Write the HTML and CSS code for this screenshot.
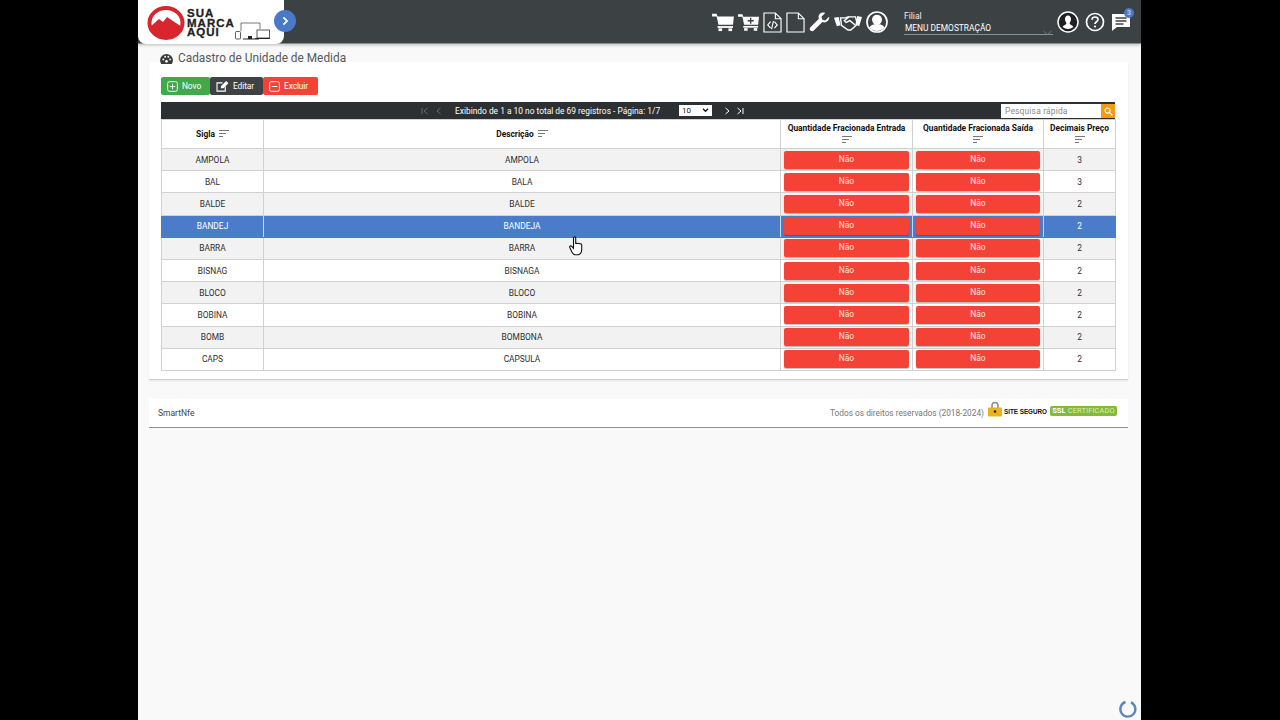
FILE: index.html
```html
<!DOCTYPE html>
<html lang="pt-BR">
<head>
<meta charset="utf-8">
<title>Cadastro de Unidade de Medida</title>
<link rel="stylesheet" href="styles.css">
</head>
<body>
<svg class="defs" width="0" height="0" aria-hidden="true">
  <symbol id="sort" viewBox="0 0 10 7"><path d="M0 .5h10M0 3.5h7M0 6.5h4" fill="none" stroke="currentColor" stroke-width="1"/></symbol>
</svg>
<div class="app">
  <header class="topbar">
    <div class="logo">
      <svg class="logo-mark" viewBox="0 0 38 34" width="38" height="34"><ellipse cx="19" cy="17" rx="16.500" ry="15" fill="#fff" stroke="#d9262e" stroke-width="4"/><path d="M3 21l9-8 4 3 4-5 15 10a16.500 15 0 0 1-32 0z" fill="#d9262e"/></svg>
      <div class="logo-text">SUA<br>MARCA<br>AQUI</div>
      <svg class="logo-dev" viewBox="0 0 36 18" width="36" height="18"><path d="M6 9V1h19v6" fill="none" stroke="#555" stroke-width=".8"/><rect x=".5" y="9.500" width="5" height="7.500" rx="1" fill="#fff" stroke="#333" stroke-width=".8"/><path d="M8 16.500h16v1H8z" fill="#222"/><path d="M13 14h4v3h-4z" fill="#222"/><rect x="22" y="8" width="12.500" height="8" fill="#fff" stroke="#333" stroke-width=".8"/><path d="M20 16.500h15" stroke="#222"/></svg>
      <span class="collapse"><svg viewBox="0 0 10 12" width="8" height="10"><path d="M3 1.500l4.500 4.500L3 10.500" fill="none" stroke="#fff" stroke-width="2.200"/></svg></span>
    </div>
    <div class="top-tools">
      <div class="tool-icons">
        <svg viewBox="0 0 24 22" width="22" height="20"><path d="M0 2h5l1 3h18l-1 9H7L5 5H0z" fill="#fff"/><path d="M6 15.500h17v2H6z" fill="#fff"/><rect x="7" y="18" width="4" height="3" fill="#fff"/><rect x="18" y="18" width="4" height="3" fill="#fff"/></svg>
        <svg viewBox="0 0 24 22" width="21" height="20"><path d="M0 2h5l1 3h18l-1 9H7L5 5H0z" fill="#fff"/><path d="M6 15.500h17v2H6z" fill="#fff"/><rect x="7" y="18" width="4" height="3" fill="#fff"/><rect x="18" y="18" width="4" height="3" fill="#fff"/><path d="M14.500 6v7M11 9.500h7" stroke="#3c4143" stroke-width="1.600"/></svg>
        <svg viewBox="0 0 20 22" width="19" height="21"><path d="M1 1h12l6 6v14H1zM13 1v6h6" fill="none" stroke="#fff" stroke-width="1.200"/><path d="M8 10l-3 3.500L8 17M12 10l3 3.500L12 17M11 9.500L9 18" fill="none" stroke="#fff" stroke-width="1.200"/></svg>
        <svg viewBox="0 0 20 22" width="19" height="21"><path d="M1 1h12l6 6v14H1zM13 1v6h6" fill="none" stroke="#fff" stroke-width="1.200"/></svg>
        <svg viewBox="0 0 22 22" width="21" height="21"><path d="M21 5l-4 4-3-1-1-3 4-4c-3-1.500-7 .5-7 4 0 1 .2 1.500.4 2L1.500 16c-1 1-1 2.500 0 3.500s2.500 1 3.500 0L14 10.600c4 1.400 8-2 7-5.600z" fill="#fff"/></svg>
        <svg viewBox="0 0 30 20" width="28" height="19"><path d="M0 5l5-1 2 9-4 1zM30 4l-5-1-2 9 4 2z" fill="#fff"/><path d="M7 5h5l3-1 8 0 2 8-7 6-3 0-7-5z" fill="none" stroke="#fff" stroke-width="1.500"/><path d="M16 4l-5 4 2 2 4-2 6 5" fill="none" stroke="#fff" stroke-width="1.500"/></svg>
        <svg viewBox="0 0 22 22" width="22" height="22"><circle cx="11" cy="11" r="10" fill="none" stroke="#fff" stroke-width="1.700"/><circle cx="11" cy="8.800" r="5" fill="#fff"/><path d="M3.500 16.500c1.500-3 5-3.500 7.500-3.500s6 .5 7.500 3.500a10 10 0 0 1-15 0z" fill="#fff"/></svg>
      </div>
      <div class="branch">
        <div class="branch-label">Filial</div>
        <div class="branch-value">MENU DEMOSTRAÇÃO<svg class="branch-caret" viewBox="0 0 10 6" width="9" height="6"><path d="M1 1l4 4 4-4" fill="none" stroke="#7d8386" stroke-width="1"/></svg></div>
      </div>
      <div class="user-icons">
        <svg viewBox="0 0 22 22" width="22" height="22"><circle cx="11" cy="11" r="10" fill="#1f2224" stroke="#fff" stroke-width="1.500"/><path d="M11 4.500c2 0 3.200 1.700 3 4-.2 1.700-1 2.700-1.500 3.700.2 1.500 2.800 1.800 4 3.800a9 9 0 0 1-11 0c1.200-2 3.800-2.300 4-3.800-.5-1-1.300-2-1.500-3.700-.2-2.300 1-4 3-4z" fill="#fff"/></svg>
        <svg viewBox="0 0 20 20" width="20" height="20"><circle cx="10" cy="10" r="8.500" fill="none" stroke="#fff" stroke-width="1.700"/><path d="M7 7.800C7 6 8.300 5 10 5s3 1 3 2.600c0 2.200-3 2.200-3 4.400" fill="none" stroke="#fff" stroke-width="1.700"/><circle cx="10" cy="14.500" r="1.100" fill="#fff"/></svg>
        <span class="chat">
          <svg viewBox="0 0 20 20" width="20" height="20"><path d="M1 2h18v13H6l-5 4z" fill="#fff"/><path d="M4.500 6h11M4.500 9h11M4.500 12h8" stroke="#3c4143" stroke-width="1.300"/></svg>
          <span class="badge">3</span>
        </span>
      </div>
    </div>
  </header>

  <main class="content">
    <h1 class="page-title">
      <svg viewBox="0 0 14 11" width="13" height="10"><path d="M7 0a7 7 0 0 0-7 7c0 1.500.5 3 1.200 4h11.600c.7-1 1.200-2.500 1.200-4a7 7 0 0 0-7-7z" fill="#3a3d3f"/><circle cx="3.500" cy="6" r="1" fill="#fff"/><circle cx="5.500" cy="3" r="1" fill="#fff"/><circle cx="9" cy="3" r="1" fill="#fff"/><circle cx="11" cy="6" r="1" fill="#fff"/><circle cx="7" cy="8" r="1.500" fill="#fff"/></svg>
      Cadastro de Unidade de Medida
    </h1>
    <section class="card">
      <div class="actions">
        <button class="btn btn-new"><svg viewBox="0 0 12 12" width="11" height="11"><rect x=".7" y=".7" width="10.600" height="10.600" rx="2" fill="none" stroke="#fff"/><path d="M6 3v6M3 6h6" stroke="#fff"/></svg>Novo</button>
        <button class="btn btn-edit"><svg viewBox="0 0 14 12" width="13" height="11"><path d="M10 6v5H1V2h6" fill="none" stroke="#fff" stroke-width="1.200"/><path d="M5 8l.5-2.500L11 0l2.500 2.500L8 8z" fill="#fff"/></svg>Editar</button>
        <button class="btn btn-del"><svg viewBox="0 0 12 12" width="11" height="11"><rect x=".7" y=".7" width="10.600" height="10.600" rx="2" fill="none" stroke="#fff"/><path d="M3 6h6" stroke="#fff"/></svg>Excluir</button>
      </div>
      <div class="paginator">
        <div class="pager">
          <svg class="pg dim" viewBox="0 0 8 8" width="8" height="8"><path d="M1 1v6M6.500 1L3 4l3.500 3" fill="none" stroke="currentColor"/></svg>
          <svg class="pg dim gap" viewBox="0 0 8 8" width="8" height="8"><path d="M5.500 1L2 4l3.500 3" fill="none" stroke="currentColor"/></svg>
          <span class="pager-text">Exibindo de 1 a 10 no total de 69 registros - Página: 1/7</span>
          <span class="page-size">10<svg viewBox="0 0 8 6" width="7" height="5"><path d="M1 1l3 3 3-3" fill="none" stroke="#111" stroke-width="1.600"/></svg></span>
          <svg class="pg" viewBox="0 0 8 8" width="8" height="8"><path d="M2.500 1L6 4 2.500 7" fill="none" stroke="currentColor"/></svg>
          <svg class="pg" viewBox="0 0 8 8" width="8" height="8"><path d="M1.500 1L5 4 1.500 7M7 1v6" fill="none" stroke="currentColor"/></svg>
        </div>
        <div class="search">
          <span class="search-input">Pesquisa rápida</span>
          <span class="search-btn"><svg viewBox="0 0 10 10" width="9" height="9"><circle cx="4" cy="4" r="2.800" fill="none" stroke="#fff" stroke-width="1.200"/><path d="M6 6l3.300 3.300" stroke="#fff" stroke-width="1.400"/></svg></span>
        </div>
      </div>
      <table class="grid">
        <colgroup><col class="c1"><col class="c2"><col class="c3"><col class="c4"><col class="c5"></colgroup>
        <thead>
          <tr>
            <th>Sigla <svg class="sort" width="10" height="7"><use href="#sort"/></svg></th>
            <th>Descrição <svg class="sort" width="10" height="7"><use href="#sort"/></svg></th>
            <th class="stack">Quantidade Fracionada Entrada<svg class="sort" width="10" height="7"><use href="#sort"/></svg></th>
            <th class="stack">Quantidade Fracionada Saída<svg class="sort" width="10" height="7"><use href="#sort"/></svg></th>
            <th class="stack">Decimais Preço<svg class="sort" width="10" height="7"><use href="#sort"/></svg></th>
          </tr>
        </thead>
        <tbody>
          <tr><td>AMPOLA</td><td>AMPOLA</td><td><span class="no">Não</span></td><td><span class="no">Não</span></td><td>3</td></tr>
          <tr><td>BAL</td><td>BALA</td><td><span class="no">Não</span></td><td><span class="no">Não</span></td><td>3</td></tr>
          <tr><td>BALDE</td><td>BALDE</td><td><span class="no">Não</span></td><td><span class="no">Não</span></td><td>2</td></tr>
          <tr class="selected"><td>BANDEJ</td><td>BANDEJA</td><td><span class="no">Não</span></td><td><span class="no">Não</span></td><td>2</td></tr>
          <tr><td>BARRA</td><td>BARRA</td><td><span class="no">Não</span></td><td><span class="no">Não</span></td><td>2</td></tr>
          <tr><td>BISNAG</td><td>BISNAGA</td><td><span class="no">Não</span></td><td><span class="no">Não</span></td><td>2</td></tr>
          <tr><td>BLOCO</td><td>BLOCO</td><td><span class="no">Não</span></td><td><span class="no">Não</span></td><td>2</td></tr>
          <tr><td>BOBINA</td><td>BOBINA</td><td><span class="no">Não</span></td><td><span class="no">Não</span></td><td>2</td></tr>
          <tr><td>BOMB</td><td>BOMBONA</td><td><span class="no">Não</span></td><td><span class="no">Não</span></td><td>2</td></tr>
          <tr><td>CAPS</td><td>CAPSULA</td><td><span class="no">Não</span></td><td><span class="no">Não</span></td><td>2</td></tr>
        </tbody>
      </table>
    </section>
    <footer class="footer">
      <span class="brand">SmartNfe</span>
      <div class="foot-right">
        <span class="rights">Todos os direitos reservados (2018-2024)</span>
        <svg class="lock" viewBox="0 0 14 16" width="14" height="16"><path d="M4 7V4.500a3 3 0 0 1 6 0V7" fill="none" stroke="#8b8d8f" stroke-width="1.600"/><rect x="0" y="6.500" width="14" height="9" rx="1" fill="#e9b31f"/><circle cx="7" cy="10.500" r="1.300" fill="#222"/></svg>
        <span class="seguro">SITE SEGURO</span>
        <span class="ssl"><b>SSL</b> CERTIFICADO</span>
      </div>
    </footer>
  </main>

  <svg class="cursor" viewBox="0 0 14 20" width="14" height="20"><path d="M4.500 2c0-1.500 2.200-1.500 2.200 0v6c0-1 2-1 2 0 0-1 2-1 2 .2 0-.8 2-.7 2 .5v5c0 2.500-1.500 5-3.500 5H6c-1.500 0-2-1-3-2.500L.8 11.500c-.7-1.200 1-2.300 2-1l1.700 1.800z" fill="#fff" stroke="#111" stroke-width="1.100"/></svg>
  <svg class="spinner" viewBox="0 0 20 20" width="20" height="20"><path d="M13 3.300A7.500 7.500 0 1 1 7.500 3" fill="none" stroke="#5d86bd" stroke-width="2.400"/></svg>
</div>
</body>
</html>
```
FILE: styles.css
```css
* { box-sizing: border-box; }
html, body { margin: 0; height: 100%; }
body {
  background: #000;
  font-family: Roboto, "Liberation Sans", sans-serif;
  overflow: hidden;
}
.defs { position: absolute; }
.app {
  position: relative;
  width: 1003px;
  height: 720px;
  margin-left: 138px;
  background: #f9f9f9;
}
.topbar {
  height: 44px;
  background: #3c4143;
  border-bottom: 1px solid #8c8f90;
  box-shadow: 0 1px 3px rgba(0,0,0,.25);
  display: flex;
  justify-content: space-between;
}
.logo {
  position: relative;
  width: 146px;
  height: 44px;
  background: #fff;
  border-radius: 0 0 8px 8px;
  display: flex;
  align-items: flex-start;
  padding: 6px 0 0 9px;
}
.logo-text {
  margin-left: 2px;
  margin-top: 3px;
  font: 900 11.500px/9.500px "Liberation Sans", sans-serif;
  letter-spacing: 1px;
  color: #222;
  -webkit-text-stroke: .3px #222;
}
.logo-dev { position: absolute; left: 97px; top: 22px; }
.collapse {
  position: absolute;
  left: 136px;
  top: 10px;
  width: 22px;
  height: 22px;
  border-radius: 50%;
  background: #4a7ac7;
  display: flex;
  align-items: center;
  justify-content: center;
}
.top-tools { display: flex; align-items: flex-start; }
.tool-icons {
  display: flex;
  align-items: center;
  gap: 4px;
  margin-top: 11px;
}
.branch { width: 149px; margin-left: 16px; margin-top: 11px; margin-right: 4px; color: #fff; }
.branch-label { font-size: 8.500px; line-height: 11px; color: #eee; }
.branch-value {
  position: relative;
  font-size: 8.400px;
  line-height: 13px;
  height: 13px;
  padding-left: 1px;
  border-bottom: 1px solid #8a8f91;
  white-space: nowrap;
}
.branch-caret { position: absolute; right: 1px; top: 8px; }
.user-icons {
  display: flex;
  align-items: center;
  gap: 6px;
  margin-top: 11px;
  margin-right: 10px;
}
.chat { position: relative; display: flex; }
.badge {
  position: absolute;
  right: -3px;
  top: -4px;
  width: 10px;
  height: 10px;
  border-radius: 50%;
  background: #4a7ac7;
  color: #dfe8f5;
  font-size: 7px;
  line-height: 10px;
  text-align: center;
}
.content { padding: 0 13px 0 11px; }
.page-title {
  margin: 0;
  height: 18px;
  padding: 7px 0 0 11px;
  font-size: 11.850px;
  font-weight: 400;
  line-height: 15px;
  color: #55595b;
  display: flex;
  align-items: flex-start;
  gap: 5px;
}
.page-title svg { margin-top: 3px; }
.card {
  background: #fff;
  height: 318px;
  padding: 15px 13px 0 12px;
  border-bottom: 1px solid #cfcfcf;
  box-shadow: 0 1px 2px rgba(0,0,0,.08);
}
.actions { display: flex; height: 18px; }
.btn {
  height: 18px;
  border: 0;
  border-radius: 2px;
  padding: 0 8px 0 6px;
  display: flex;
  align-items: center;
  gap: 4px;
  color: #fff;
  font: 400 8.400px Roboto, sans-serif;
  letter-spacing: -.1px;
}
.btn-new { width: 49px; background: #43a84a; }
.btn-edit { width: 53px; background: #3e4245; }
.btn-del { width: 55px; background: #f44336; }
.paginator {
  margin-top: 7px;
  height: 17px;
  background: #2c3032;
  display: flex;
  align-items: center;
  color: #fff;
  position: relative;
}
.pager { display: flex; align-items: center; margin-left: 260px; }
.pg { color: #fff; margin-right: 5px; }
.pg.dim { color: #666b6e; }
.pg.gap { margin-right: 0; margin-left: 1px; }
.pager-text {
  margin-left: 12px;
  width: 224px;
  font-size: 8.400px;
  white-space: nowrap;
}
.page-size {
  width: 33px;
  height: 11px;
  background: #fff;
  color: #222;
  margin-right: 11px;
  font-size: 8px;
  line-height: 11px;
  padding: 0 3px;
  display: flex;
  justify-content: space-between;
  align-items: center;
}
.search {
  position: absolute;
  right: 0;
  top: 2px;
  display: flex;
  height: 14px;
}
.search-input {
  width: 100px;
  background: #fff;
  color: #888;
  font-size: 8.400px;
  line-height: 14px;
  padding-left: 4px;
  letter-spacing: .2px;
}
.search-btn {
  width: 14px;
  background: #f39c12;
  display: flex;
  align-items: center;
  justify-content: center;
}
.grid {
  width: 954px;
  table-layout: fixed;
  border-collapse: collapse;
  font-size: 8.400px;
  color: #2e2e2e;
  background: #fff;
}
.c1 { width: 102px; }
.c2 { width: 517px; }
.c3 { width: 132px; }
.c4 { width: 131px; }
.c5 { width: 72px; }
.grid th, .grid td {
  border: 1px solid #cfd1d2;
  padding: 0 3px;
  text-align: center;
  vertical-align: middle;
}
.grid th {
  height: 29px;
  color: #111;
  font-size: 8.400px;
  font-weight: 700;
  white-space: nowrap;
}
.grid th.stack { vertical-align: top; padding-top: 3px; line-height: 11px; }
.stack .sort { display: block; margin: 2px auto 0; }
.sort { color: #777; vertical-align: 0; margin-left: 2px; }
.grid td { height: 22.200px; line-height: 12px; }
.grid tbody tr:nth-child(odd) td { background: #f2f2f2; }
.grid tbody tr.selected td {
  background: #4a7cc9;
  color: #fff;
  border-top-color: #4a7cc9;
  border-bottom-color: #4a7cc9;
  border-right-color: #c9d8ef;
  border-left-color: #c9d8ef;
}
.grid tbody tr.selected td:first-child { border-left-color: #4a7cc9; }
.grid tbody tr.selected td:last-child { border-right-color: #4a7cc9; }
.no {
  display: block;
  height: 18px;
  line-height: 16px;
  background: #f44336;
  color: #ffe6e3;
  border-radius: 2px;
  box-shadow: 0 1px 1px rgba(0,0,0,.25);
}
.footer {
  margin-top: 19px;
  height: 29px;
  background: #fff;
  border-bottom: 1px solid #8f9193;
  padding: 0 11px 0 9px;
  display: flex;
  align-items: center;
  justify-content: space-between;
  font-size: 8.500px;
  color: #444;
}
.foot-right { display: flex; align-items: center; margin-top: -4px; }
.rights { color: #777; margin-top: 4px; margin-right: 4px; font-size: 8.300px; }
.lock { margin-top: -5px; }
.seguro {
  margin-left: 2px;
  font: 700 6.300px "Liberation Sans", sans-serif;
  color: #111;
  margin-top: 1px;
}
.ssl {
  margin-left: 3px;
  height: 10px;
  width: 67px;
  background: #84b93a;
  border-radius: 2px;
  color: #d9efb8;
  font-size: 7.500px;
  line-height: 10px;
  text-align: center;
  letter-spacing: .1px;
  white-space: nowrap;
}
.ssl b { color: #fff; }
.cursor { position: absolute; left: 431px; top: 236px; }
.spinner { position: absolute; left: 980px; top: 699px; }
```
